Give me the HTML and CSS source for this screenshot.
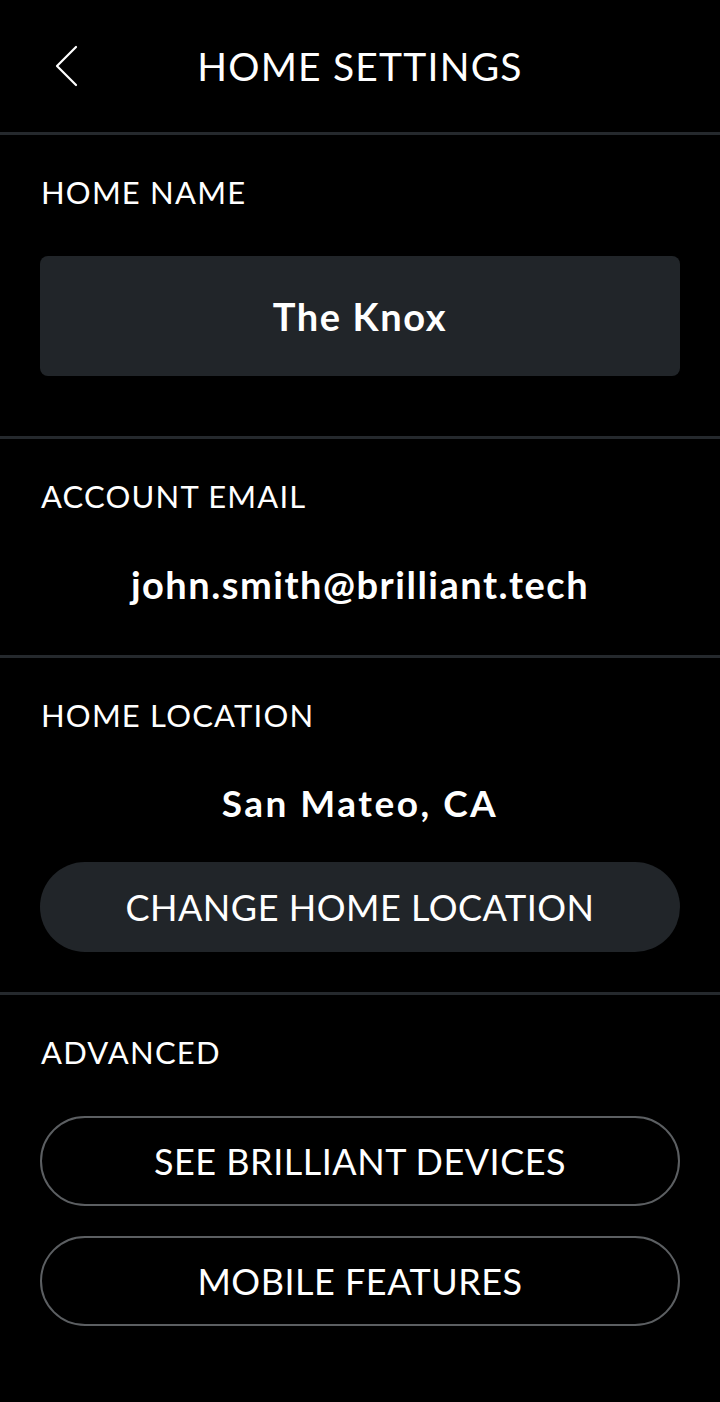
FILE: index.html
```html
<!DOCTYPE html>
<html lang="en">
<head>
<meta charset="utf-8">
<title>Home Settings</title>
<link rel="stylesheet" href="styles.css">
</head>
<body>
<div class="screen">
  <header class="topbar">
    <button class="back" aria-label="Back">
      <svg width="24" height="42" viewBox="0 0 24 42" aria-hidden="true">
        <polyline points="21,2 2,21 21,40" fill="none" stroke="#ffffff" stroke-width="2.2" stroke-linecap="round" stroke-linejoin="round"/>
      </svg>
    </button>
    <h1 class="title">HOME SETTINGS</h1>
  </header>

  <section class="section s-name">
    <div class="label">HOME NAME</div>
    <div class="name-box">The Knox</div>
  </section>

  <section class="section s-email">
    <div class="label">ACCOUNT EMAIL</div>
    <div class="value email">john.smith@brilliant.tech</div>
  </section>

  <section class="section s-location">
    <div class="label">HOME LOCATION</div>
    <div class="value city">San Mateo, CA</div>
    <button class="pill pill-filled">CHANGE HOME LOCATION</button>
  </section>

  <section class="section s-advanced">
    <div class="label">ADVANCED</div>
    <div class="pill-list">
      <button class="pill pill-outline">SEE BRILLIANT DEVICES</button>
      <button class="pill pill-outline">MOBILE FEATURES</button>
    </div>
  </section>
</div>
</body>
</html>
```

FILE: styles.css
```css
html, body {
  margin: 0;
  padding: 0;
  background: #000000;
}

body {
  font-family: "Lato", "Open Sans", sans-serif;
  color: #ffffff;
}

.screen {
  width: 720px;
  min-height: 1402px;
  background: #000000;
}

.topbar {
  position: relative;
  height: 132px;
  display: flex;
  align-items: center;
  justify-content: center;
}

.back {
  position: absolute;
  left: 55px;
  top: 45px;
  width: 24px;
  height: 42px;
  padding: 0;
  margin: 0;
  border: 0;
  background: none;
  display: block;
}

.back svg {
  display: block;
}

.title {
  margin: 0;
  font-size: 39px;
  line-height: 39px;
  font-weight: 400;
  letter-spacing: 1.2px;
}

.section {
  border-top: 3px solid #25292d;
  padding: 42px 40px 0 40px;
}

.label {
  font-size: 31px;
  line-height: 30px;
  font-weight: 400;
  letter-spacing: 1.2px;
  padding-left: 1px;
}

.s-name {
  padding-bottom: 60px;
}

.name-box {
  margin-top: 49px;
  height: 120px;
  border-radius: 8px;
  background: #212529;
  display: flex;
  align-items: center;
  justify-content: center;
  font-size: 38px;
  font-weight: 700;
  letter-spacing: 1.6px;
}

.value {
  text-align: center;
  font-weight: 700;
  line-height: 50px;
}

.s-email {
  padding-bottom: 46px;
}

.email {
  margin-top: 48px;
  font-size: 38px;
  letter-spacing: 1.5px;
}

.s-location {
  padding-bottom: 40px;
}

.city {
  margin-top: 48px;
  font-size: 37px;
  letter-spacing: 2.5px;
}

.pill {
  display: flex;
  align-items: center;
  justify-content: center;
  width: 100%;
  height: 90px;
  border-radius: 45px;
  margin: 0;
  padding: 0;
  font-family: "Lato", "Open Sans", sans-serif;
  font-size: 36px;
  line-height: 36px;
  font-weight: 400;
  letter-spacing: 0.5px;
  color: #ffffff;
  box-sizing: border-box;
}

.pill-filled {
  margin-top: 34px;
  background: #212529;
  border: 0;
}

.pill-list {
  margin-top: 49px;
  display: flex;
  flex-direction: column;
  gap: 30px;
}

.pill-outline {
  background: transparent;
  border: 2px solid #5c5f62;
}
```
